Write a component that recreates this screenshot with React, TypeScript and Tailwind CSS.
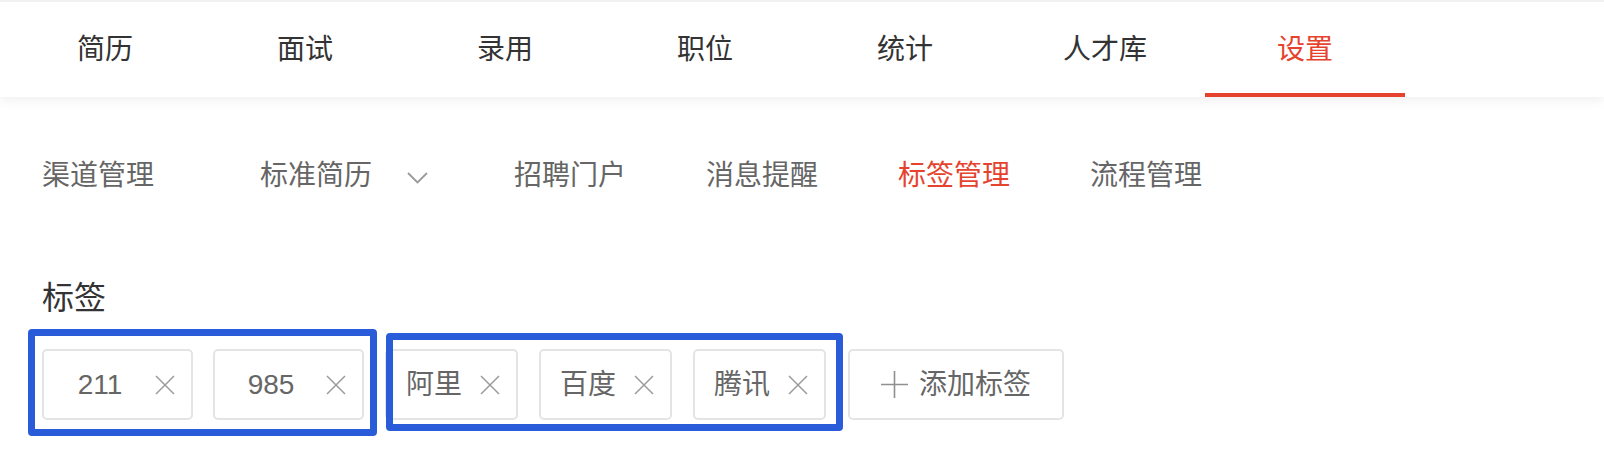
import React from "react";

const NAV = ["简历", "面试", "录用", "职位", "统计", "人才库", "设置"];
const ACTIVE_NAV = "设置";

function CloseIcon() {
  return (
    <svg width="20" height="20" viewBox="0 0 20 20" className="shrink-0">
      <path d="M1 1L19 19M19 1L1 19" stroke="#9b9b9b" strokeWidth="1.5" fill="none" />
    </svg>
  );
}

function Tag({ label, numeric }: { label: string; numeric?: boolean }) {
  return (
    <div
      className={`h-[71px] ${numeric ? "w-[151px]" : "w-[133px]"} border-2 border-[#e4e4e4] rounded-[5px] bg-white flex items-center pl-[19px] pr-[16px]`}
    >
      <span className={`text-[28px] leading-none text-[#666] ${numeric ? "w-[74px] text-center" : ""}`}>{label}</span>
      <span className="ml-[18px] flex items-center">
        <CloseIcon />
      </span>
    </div>
  );
}

export default function App() {
  return (
    <div className="min-h-screen bg-white font-['Liberation_Sans','Noto_Sans_CJK_SC',sans-serif]">
      {/* Top nav */}
      <nav className="relative z-10 h-[97px] border-t-2 border-[#f1f1f1] bg-white shadow-[0_4px_10px_rgba(0,0,0,0.06)] pl-[5px] flex">
        {NAV.map((n) => (
          <div
            key={n}
            className={`w-[200px] h-full flex items-center justify-center text-[28px] leading-none ${
              n === ACTIVE_NAV ? "text-[#e6432f] shadow-[inset_0_-4px_0_#e6432f]" : "text-[#333]"
            }`}
          >
            {n}
          </div>
        ))}
      </nav>

      {/* Sub nav */}
      <div className="mt-[49px] h-[60px] pl-[42px] flex items-center text-[28px] leading-none text-[#666]">
        <span>渠道管理</span>
        <span className="ml-[106px]">标准简历</span>
        <svg width="21" height="12" viewBox="0 0 21 12" className="ml-[35px] mt-[4px]">
          <path d="M1 1L10.5 10.5L20 1" stroke="#9a9a9a" strokeWidth="1.8" fill="none" />
        </svg>
        <span className="ml-[86px]">招聘门户</span>
        <span className="ml-[80px]">消息提醒</span>
        <span className="ml-[80px] text-[#e6432f]">标签管理</span>
        <span className="ml-[80px]">流程管理</span>
      </div>

      {/* Tags */}
      <div className="pl-[42px]">
        <h2 className="mt-[76px] text-[32px] leading-none text-[#333]">标签</h2>
        <div className="mt-[35px] flex items-center">
          <div className="relative flex gap-[20px]">
            <Tag label="211" numeric />
            <Tag label="985" numeric />
            <div className="absolute left-[-14px] right-[-13px] top-[-20px] bottom-[-16px] border-[7px] border-[#2a5bd8] rounded-[4px] pointer-events-none" />
          </div>
          <div className="relative ml-[21px] flex gap-[21px]">
            <Tag label="阿里" />
            <Tag label="百度" />
            <Tag label="腾讯" />
            <div className="absolute left-[1px] right-[-17px] top-[-16px] bottom-[-11px] border-[7px] border-[#2a5bd8] rounded-[4px] pointer-events-none" />
          </div>
          <button className="ml-[22px] h-[71px] w-[216px] border-2 border-[#e4e4e4] rounded-[5px] bg-white flex items-center justify-center gap-[11px] text-[28px] leading-none text-[#666]">
            <svg width="27" height="27" viewBox="0 0 27 27">
              <path d="M13.5 0V27M0 13.5H27" stroke="#8f8f8f" strokeWidth="1.6" fill="none" />
            </svg>
            <span>添加标签</span>
          </button>
        </div>
      </div>
    </div>
  );
}
